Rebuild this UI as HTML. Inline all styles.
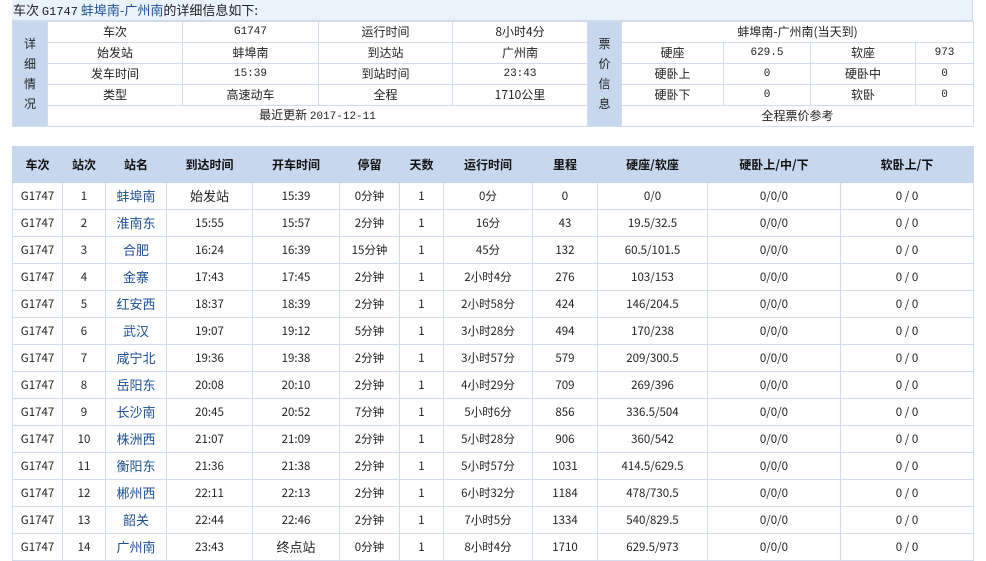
<!DOCTYPE html>
<html><head><meta charset="utf-8"><style>
*{margin:0;padding:0;box-sizing:border-box}
body{width:986px;height:561px;background:#fff;font-family:"Liberation Sans","Noto Sans CJK SC",sans-serif;font-size:12px;color:#222;position:relative;overflow:hidden}
.t{position:absolute;left:12px;top:0;width:961px;height:21px;background:#eaf2fc;border-right:1px solid #d0dbe9;border-bottom:1px solid #d0dbe9;line-height:20px;font-size:13px;padding-left:1px;font-family:"Noto Sans CJK SC",sans-serif}
.t .m{font-family:"Liberation Mono",monospace;font-size:12px}
a{color:#1f4f93;text-decoration:none}
table{border-collapse:collapse;position:absolute;table-layout:fixed}
td,th{border:1px solid #d3dcea;text-align:center;font-weight:normal;white-space:nowrap;overflow:hidden;line-height:16px}
.d td{height:21px;font-size:12px;font-family:"Noto Sans CJK SC",sans-serif}
.lab{background:#c7d7ee;font-size:13px;line-height:20px!important;white-space:normal}
.m2{font-family:"Liberation Mono",monospace!important;font-size:11px!important}
.b th{background:#c6d7ee;height:36px;font-weight:bold;font-size:12px;color:#111;border-color:#c6d7ee;font-family:"Noto Sans CJK SC",sans-serif}
.b td{height:27px;font-size:11.5px;font-family:"Noto Sans CJK SC",sans-serif}
.b td.n{font-size:13px}
</style></head><body>
<div class="t">车次 <span class="m">G1747</span> <a>蚌埠南-广州南</a>的详细信息如下:</div>
<table class="d" style="left:12px;top:21px;width:961px">
<colgroup><col style="width:35px"><col style="width:135px"><col style="width:136px"><col style="width:134px"><col style="width:135px"><col style="width:34px"><col style="width:102px"><col style="width:87px"><col style="width:105px"><col style="width:58px"></colgroup>
<tr><td rowspan="5" class="lab">详<br>细<br>情<br>况</td><td>车次</td><td class="m2">G1747</td><td>运行时间</td><td>8小时4分</td><td rowspan="5" class="lab">票<br>价<br>信<br>息</td><td colspan="4">蚌埠南-广州南(当天到)</td></tr>
<tr><td>始发站</td><td>蚌埠南</td><td>到达站</td><td>广州南</td><td>硬座</td><td class="m2">629.5</td><td>软座</td><td class="m2">973</td></tr>
<tr><td>发车时间</td><td class="m2">15:39</td><td>到站时间</td><td class="m2">23:43</td><td>硬卧上</td><td class="m2">0</td><td>硬卧中</td><td class="m2">0</td></tr>
<tr><td>类型</td><td>高速动车</td><td>全程</td><td>1710公里</td><td>硬卧下</td><td class="m2">0</td><td>软卧</td><td class="m2">0</td></tr>
<tr><td colspan="4">最近更新 <span class="m2">2017-12-11</span></td><td colspan="4">全程票价参考</td></tr>
</table>
<table class="b" style="left:12px;top:146px;width:961px">
<colgroup><col style="width:50px"><col style="width:43px"><col style="width:61px"><col style="width:86px"><col style="width:87px"><col style="width:60px"><col style="width:44px"><col style="width:89px"><col style="width:65px"><col style="width:110px"><col style="width:133px"><col style="width:133px"></colgroup>
<tr><th>车次</th><th>站次</th><th>站名</th><th>到达时间</th><th>开车时间</th><th>停留</th><th>天数</th><th>运行时间</th><th>里程</th><th>硬座/软座</th><th>硬卧上/中/下</th><th>软卧上/下</th></tr>
<tr><td>G1747</td><td>1</td><td class="n"><a>蚌埠南</a></td><td class="n">始发站</td><td>15:39</td><td>0分钟</td><td>1</td><td>0分</td><td>0</td><td>0/0</td><td>0/0/0</td><td>0 / 0</td></tr>
<tr><td>G1747</td><td>2</td><td class="n"><a>淮南东</a></td><td>15:55</td><td>15:57</td><td>2分钟</td><td>1</td><td>16分</td><td>43</td><td>19.5/32.5</td><td>0/0/0</td><td>0 / 0</td></tr>
<tr><td>G1747</td><td>3</td><td class="n"><a>合肥</a></td><td>16:24</td><td>16:39</td><td>15分钟</td><td>1</td><td>45分</td><td>132</td><td>60.5/101.5</td><td>0/0/0</td><td>0 / 0</td></tr>
<tr><td>G1747</td><td>4</td><td class="n"><a>金寨</a></td><td>17:43</td><td>17:45</td><td>2分钟</td><td>1</td><td>2小时4分</td><td>276</td><td>103/153</td><td>0/0/0</td><td>0 / 0</td></tr>
<tr><td>G1747</td><td>5</td><td class="n"><a>红安西</a></td><td>18:37</td><td>18:39</td><td>2分钟</td><td>1</td><td>2小时58分</td><td>424</td><td>146/204.5</td><td>0/0/0</td><td>0 / 0</td></tr>
<tr><td>G1747</td><td>6</td><td class="n"><a>武汉</a></td><td>19:07</td><td>19:12</td><td>5分钟</td><td>1</td><td>3小时28分</td><td>494</td><td>170/238</td><td>0/0/0</td><td>0 / 0</td></tr>
<tr><td>G1747</td><td>7</td><td class="n"><a>咸宁北</a></td><td>19:36</td><td>19:38</td><td>2分钟</td><td>1</td><td>3小时57分</td><td>579</td><td>209/300.5</td><td>0/0/0</td><td>0 / 0</td></tr>
<tr><td>G1747</td><td>8</td><td class="n"><a>岳阳东</a></td><td>20:08</td><td>20:10</td><td>2分钟</td><td>1</td><td>4小时29分</td><td>709</td><td>269/396</td><td>0/0/0</td><td>0 / 0</td></tr>
<tr><td>G1747</td><td>9</td><td class="n"><a>长沙南</a></td><td>20:45</td><td>20:52</td><td>7分钟</td><td>1</td><td>5小时6分</td><td>856</td><td>336.5/504</td><td>0/0/0</td><td>0 / 0</td></tr>
<tr><td>G1747</td><td>10</td><td class="n"><a>株洲西</a></td><td>21:07</td><td>21:09</td><td>2分钟</td><td>1</td><td>5小时28分</td><td>906</td><td>360/542</td><td>0/0/0</td><td>0 / 0</td></tr>
<tr><td>G1747</td><td>11</td><td class="n"><a>衡阳东</a></td><td>21:36</td><td>21:38</td><td>2分钟</td><td>1</td><td>5小时57分</td><td>1031</td><td>414.5/629.5</td><td>0/0/0</td><td>0 / 0</td></tr>
<tr><td>G1747</td><td>12</td><td class="n"><a>郴州西</a></td><td>22:11</td><td>22:13</td><td>2分钟</td><td>1</td><td>6小时32分</td><td>1184</td><td>478/730.5</td><td>0/0/0</td><td>0 / 0</td></tr>
<tr><td>G1747</td><td>13</td><td class="n"><a>韶关</a></td><td>22:44</td><td>22:46</td><td>2分钟</td><td>1</td><td>7小时5分</td><td>1334</td><td>540/829.5</td><td>0/0/0</td><td>0 / 0</td></tr>
<tr><td>G1747</td><td>14</td><td class="n"><a>广州南</a></td><td>23:43</td><td class="n">终点站</td><td>0分钟</td><td>1</td><td>8小时4分</td><td>1710</td><td>629.5/973</td><td>0/0/0</td><td>0 / 0</td></tr>
</table>
</body></html>
